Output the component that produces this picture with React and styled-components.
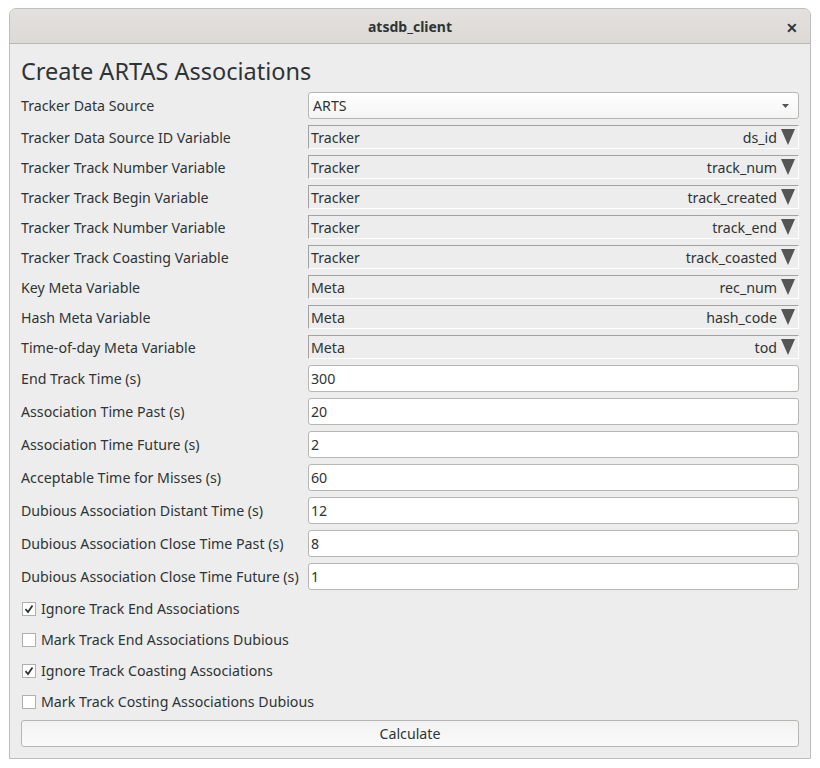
import React from "react";
import styled, { createGlobalStyle } from "styled-components";

const Global = createGlobalStyle`
  html, body { margin: 0; padding: 0; background: #ffffff; }
  body { font-family: "Noto Sans", "Open Sans", sans-serif; color: #2e3436; }
`;

const Page = styled.div`
  padding: 8px 9px 0 9px;
  width: 802px;
`;

const Window = styled.div`
  border: 1px solid #bdbdbd;
  border-radius: 7px 7px 0 0;
  background: #ededed;
  overflow: hidden;
`;

const TitleBar = styled.div`
  height: 34px;
  background: linear-gradient(#e3e0dd, #dcd9d6);
  border-bottom: 1px solid #bcb8b4;
  display: flex;
  align-items: center;
  justify-content: center;
  position: relative;
  font-weight: bold;
  font-size: 14px;
  color: #2e3436;
`;

const Close = styled.span`
  position: absolute;
  right: 12px;
  top: 9px;
  font-size: 14px;
  font-weight: bold;
  color: #2e3436;
`;

const Content = styled.div`
  padding: 12px 11px 11px 11px;
  display: flex;
  flex-direction: column;
  gap: 6px;
`;

const Heading = styled.h1`
  margin: 0;
  font-weight: normal;
  font-size: 23.5px;
  line-height: 30px;
  height: 30px;
  color: #2e3436;
`;

const Row = styled.div`
  display: grid;
  grid-template-columns: 287px 1fr;
  align-items: center;
  height: ${(p) => p.$h}px;
`;

const Label = styled.span`
  font-size: 14.2px;
  color: #2e3436;
  white-space: nowrap;
`;

const Combo = styled.div`
  height: 25px;
  border: 1px solid #b6b6b3;
  border-radius: 3px;
  background: linear-gradient(#ffffff, #f4f4f4);
  display: flex;
  align-items: center;
  justify-content: space-between;
  padding: 0 9px 0 4px;
  font-size: 14.2px;
`;

const VarBox = styled.div`
  height: 22px;
  border-top: 1px solid #a2a2a2;
  border-left: 1px solid #a2a2a2;
  border-bottom: 1px solid #ffffff;
  border-right: 1px solid #ffffff;
  background: #ededed;
  display: flex;
  align-items: center;
  justify-content: space-between;
  padding: 0 3px 0 2px;
  font-size: 14.2px;
`;

const VarRight = styled.span`
  display: flex;
  align-items: center;
  gap: 4px;
`;

const Input = styled.div`
  height: 25px;
  border: 1px solid #b6b6b3;
  border-radius: 3px;
  background: #ffffff;
  display: flex;
  align-items: center;
  padding: 0 2px;
  font-size: 14.2px;
`;

const CheckRow = styled.label`
  height: 25px;
  display: flex;
  align-items: center;
  gap: 5px;
  padding-left: 1px;
  font-size: 14.2px;
`;

const Box = styled.span`
  width: 12px;
  height: 12px;
  border: 1px solid #b0b0b0;
  background: #ffffff;
  display: flex;
  align-items: center;
  justify-content: center;
`;

const Button = styled.button`
  height: 27px;
  border: 1px solid #b6b6b3;
  border-radius: 3px;
  background: linear-gradient(#f2f2f2, #fafafa);
  font-family: inherit;
  font-size: 14.2px;
  color: #2e3436;
  padding: 0;
`;

const BigTri = () => (
  <svg width="14" height="16" viewBox="0 0 14 16">
    <polygon points="0,0 14,0 7,16" fill="#555555" />
  </svg>
);

const SmallTri = () => (
  <svg width="7" height="4" viewBox="0 0 7 4">
    <polygon points="0,0 7,0 3.5,4" fill="#555555" />
  </svg>
);

const Check = () => (
  <svg width="10" height="10" viewBox="0 0 10 10">
    <path d="M1.5 5.2 L4 8 L8.5 1.5" stroke="#2e3436" strokeWidth="1.8" fill="none" />
  </svg>
);

const vars = [
  ["Tracker Data Source ID Variable", "Tracker", "ds_id"],
  ["Tracker Track Number Variable", "Tracker", "track_num"],
  ["Tracker Track Begin Variable", "Tracker", "track_created"],
  ["Tracker Track Number Variable", "Tracker", "track_end"],
  ["Tracker Track Coasting Variable", "Tracker", "track_coasted"],
  ["Key Meta Variable", "Meta", "rec_num"],
  ["Hash Meta Variable", "Meta", "hash_code"],
  ["Time-of-day Meta Variable", "Meta", "tod"],
];

const inputs = [
  ["End Track Time (s)", "300"],
  ["Association Time Past (s)", "20"],
  ["Association Time Future (s)", "2"],
  ["Acceptable Time for Misses (s)", "60"],
  ["Dubious Association Distant Time (s)", "12"],
  ["Dubious Association Close Time Past (s)", "8"],
  ["Dubious Association Close Time Future (s)", "1"],
];

const checks = [
  ["Ignore Track End Associations", true],
  ["Mark Track End Associations Dubious", false],
  ["Ignore Track Coasting Associations", true],
  ["Mark Track Costing Associations Dubious", false],
];

export default function App() {
  return (
    <Page>
      <Global />
      <Window>
        <TitleBar>
          atsdb_client
          <Close>✕</Close>
        </TitleBar>
        <Content>
          <Heading>Create ARTAS Associations</Heading>
          <Row $h={27}>
            <Label>Tracker Data Source</Label>
            <Combo>
              <span>ARTS</span>
              <SmallTri />
            </Combo>
          </Row>
          {vars.map(([l, a, b], i) => (
            <Row $h={24} key={i}>
              <Label>{l}</Label>
              <VarBox>
                <span>{a}</span>
                <VarRight>
                  {b}
                  <BigTri />
                </VarRight>
              </VarBox>
            </Row>
          ))}
          {inputs.map(([l, v], i) => (
            <Row $h={27} key={i}>
              <Label>{l}</Label>
              <Input>{v}</Input>
            </Row>
          ))}
          {checks.map(([l, c], i) => (
            <CheckRow key={i}>
              <Box>{c && <Check />}</Box>
              {l}
            </CheckRow>
          ))}
          <Button>Calculate</Button>
        </Content>
      </Window>
    </Page>
  );
}
